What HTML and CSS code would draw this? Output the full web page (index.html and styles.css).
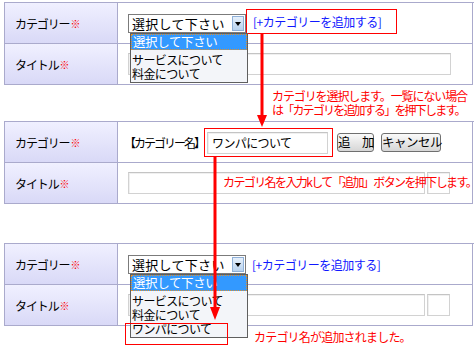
FILE: index.html
```html
<!DOCTYPE html>
<html>
    <head>
        <meta charset="UTF-8">
        <title>カテゴリー追加の手順</title>
        <link rel="stylesheet" href="styles.css">
    </head>

    <body>
        <div class="page">
            <!-- 手順1 カテゴリーを選択 -->
            <div class="form-box">
                <div class="label">カテゴリー<span class="req">※</span></div>
                <div class="field">
                    <div class="combo">
                        <div class="select">
                            <span class="select-text">選択して下さい</span>
                            <span class="select-button"></span>
                        </div>
                        <ul class="option-list">
                            <li class="selected">選択して下さい</li>
                            <li>サービスについて</li>
                            <li>料金について</li>
                        </ul>
                    </div>
                    <span class="mark-box link-box"><a class="add-link" href="#">[+カテゴリーを追加する]</a></span>
                </div>
                <div class="label">タイトル<span class="req">※</span></div>
                <div class="field">
                    <input class="text-field title-full" type="text">
                </div>
            </div>
            <p class="note note-select">
                <span class="note-line">カテゴリを選択します。一覧にない場合</span>
                <span class="note-line narrow">は「カテゴリを追加する」を押下します。</span>
            </p>

            <!-- 手順2 カテゴリー名を入力 -->
            <div class="form-box">
                <div class="label">カテゴリー<span class="req">※</span></div>
                <div class="field">
                    <span class="name-label">【カテゴリー名】</span>
                    <span class="mark-box input-box"><input class="text-field name-field" type="text" value="ワンパについて"></span>
                    <button class="btn btn-add">追　加</button>
                    <button class="btn btn-cancel">キャンセル</button>
                </div>
                <div class="label">タイトル<span class="req">※</span></div>
                <div class="field">
                    <input class="text-field title-main" type="text">
                    <input class="text-field title-sub" type="text">
                    <span class="note note-input">カテゴリ名を入力kして「追加」ボタンを押下します。</span>
                </div>
            </div>

            <!-- 手順3 追加後 -->
            <div class="form-box form-added">
                <div class="label">カテゴリー<span class="req">※</span></div>
                <div class="field">
                    <div class="combo">
                        <div class="select">
                            <span class="select-text">選択して下さい</span>
                            <span class="select-button"></span>
                        </div>
                        <ul class="option-list">
                            <li class="selected">選択して下さい</li>
                            <li>サービスについて</li>
                            <li>料金について</li>
                            <li>ワンパについて</li>
                            <span class="mark-box added-mark"></span>
                        </ul>
                    </div>
                    <a class="add-link plain-link" href="#">[+カテゴリーを追加する]</a>
                </div>
                <div class="label">タイトル<span class="req">※</span></div>
                <div class="field">
                    <input class="text-field title-main" type="text">
                    <input class="text-field title-sub" type="text">
                </div>
            </div>
            <p class="note note-added">カテゴリ名が追加されました。</p>

            <!-- 手順をつなぐ矢印 -->
            <svg class="arrows" width="475" height="350" viewBox="0 0 475 350">
                <line x1="262" y1="34" x2="262" y2="117" stroke="#ff0000" stroke-width="3"/>
                <polygon points="257,115 267,115 262,127" fill="#ff0000"/>
                <line x1="215" y1="156" x2="215" y2="309" stroke="#ff0000" stroke-width="3"/>
                <polygon points="210,307 220,307 215,320" fill="#ff0000"/>
            </svg>
        </div>
    </body>
</html>
```

FILE: styles.css
```css
html, body{
    margin: 0;
    background: #fff;
}
body{
    font-family: "Noto Sans CJK JP", sans-serif;
    font-size: 12px;
    color: #000;
}
.page{
    position: relative;
    width: 475px;
    height: 350px;
    padding: 2px 0 0 4px;
    box-sizing: border-box;
    overflow: hidden;
}

/* 入力フォームの枠 */
.form-box{
    display: grid;
    grid-template-columns: 113px 355px;
    grid-auto-rows: 41px;
    width: 469px;
    border-top: 1px solid #aaaacc;
    border-left: 1px solid #aaaacc;
}
.form-added{
    margin-top: 39px;
}
.label, .field{
    border-right: 1px solid #aaaacc;
    border-bottom: 1px solid #aaaacc;
    display: flex;
    align-items: center;
    white-space: nowrap;
}
.label{
    padding-left: 10px;
    background: linear-gradient(#f0f0ff, #d9d9f7);
    letter-spacing: -1.1px;
}
.req{
    color: #ff0000;
    font-size: 10px;
    letter-spacing: 0;
    margin-left: 1px;
}
.field{
    position: relative;
    padding-left: 10px;
}

/* セレクトボックス(開いた状態) */
.combo{
    position: relative;
    width: 118px;
    height: 19px;
}
.select{
    display: flex;
    justify-content: space-between;
    align-items: center;
    height: 19px;
    box-sizing: border-box;
    border: 1px solid #7b7b7b;
    background: #fff;
}
.select-text{
    padding-left: 3px;
    font-size: 13px;
    letter-spacing: 0.3px;
    line-height: 17px;
}
.select-button{
    position: relative;
    width: 12px;
    height: 15px;
    margin-right: 1px;
    box-sizing: border-box;
    border: 1px solid #8fb0d8;
    background: linear-gradient(#e6f0fb, #b8d2ee);
}
.select-button::after{
    content: "";
    position: absolute;
    left: 2px;
    top: 5px;
    border-left: 3px solid transparent;
    border-right: 3px solid transparent;
    border-top: 4px solid #000;
}
.option-list{
    position: absolute;
    left: 2px;
    top: 19px;
    width: 118px;
    margin: 0;
    padding: 0 0 1px;
    box-sizing: border-box;
    list-style: none;
    border: 1px solid #5f5f5f;
    background: #f3f5f9;
    z-index: 2;
    white-space: nowrap;
}
.option-list li{
    height: 14px;
    line-height: 14px;
    padding-left: 1px;
    letter-spacing: -0.6px;
}
.option-list li.selected{
    height: 16px;
    line-height: 14px;
    margin-bottom: 3px;
    box-sizing: border-box;
    border: 1px dotted #e0902c;
    background: #3399ff;
    color: #fff;
    font-size: 12.5px;
    letter-spacing: -0.4px;
}

/* 赤い囲み */
.mark-box{
    border: 1px solid #ff0000;
}
.link-box{
    align-self: flex-start;
    margin-top: 6px;
    padding: 0 15px 0 6px;
    line-height: 23px;
}
.add-link{
    color: #1018ff;
    text-decoration: none;
    letter-spacing: -0.5px;
}
.plain-link{
    margin-left: 6px;
}
.added-mark{
    position: absolute;
    left: -6px;
    top: 48px;
    width: 103px;
    height: 22px;
    box-sizing: border-box;
}

/* テキスト入力 */
.text-field{
    height: 22px;
    box-sizing: border-box;
    margin: 0;
    padding: 0 4px;
    border: 1px solid #d2d2d2;
    border-top-color: #c4c4c4;
    box-shadow: inset 1px 1px 0 #f0f0f0;
    background: #fff;
    font-family: "Noto Sans CJK JP", sans-serif;
    font-size: 12px;
    letter-spacing: -0.6px;
}
.title-full{
    width: 323px;
}
.title-main{
    width: 297px;
}
.title-sub{
    width: 23px;
    margin-left: 2px;
}
.name-label{
    margin-left: -4px;
    letter-spacing: -2px;
}
.input-box{
    display: flex;
    padding: 3px 4px 2px 2px;
}
.name-field{
    width: 121px;
}
.btn{
    height: 19px;
    margin: 0 0 0 4px;
    padding: 0;
    box-sizing: border-box;
    border: 1px solid #6f6f6f;
    border-radius: 3px;
    background: linear-gradient(#fafafa, #d6d6d6);
    font-family: "Noto Sans CJK JP", sans-serif;
    font-size: 12.5px;
    line-height: 16px;
    letter-spacing: -0.5px;
    color: #000;
    white-space: nowrap;
}
.btn-add{
    width: 37px;
}
.btn-cancel{
    width: 60px;
    margin-left: 7px;
}

/* 説明文 */
.note{
    margin: 0;
    color: #ff0000;
    line-height: 14px;
    letter-spacing: -0.8px;
    white-space: nowrap;
}
.note-select{
    padding: 4px 0 4px 268px;
}
.note-line{
    display: block;
    letter-spacing: -1.1px;
}
.note-line.narrow{
    letter-spacing: -1.8px;
}
.note-input{
    position: absolute;
    left: 105px;
    top: 12px;
    letter-spacing: -1.6px;
}
.note-added{
    padding: 4px 0 0 250px;
}

.arrows{
    position: absolute;
    left: 0;
    top: 0;
    z-index: 5;
    pointer-events: none;
}
```
